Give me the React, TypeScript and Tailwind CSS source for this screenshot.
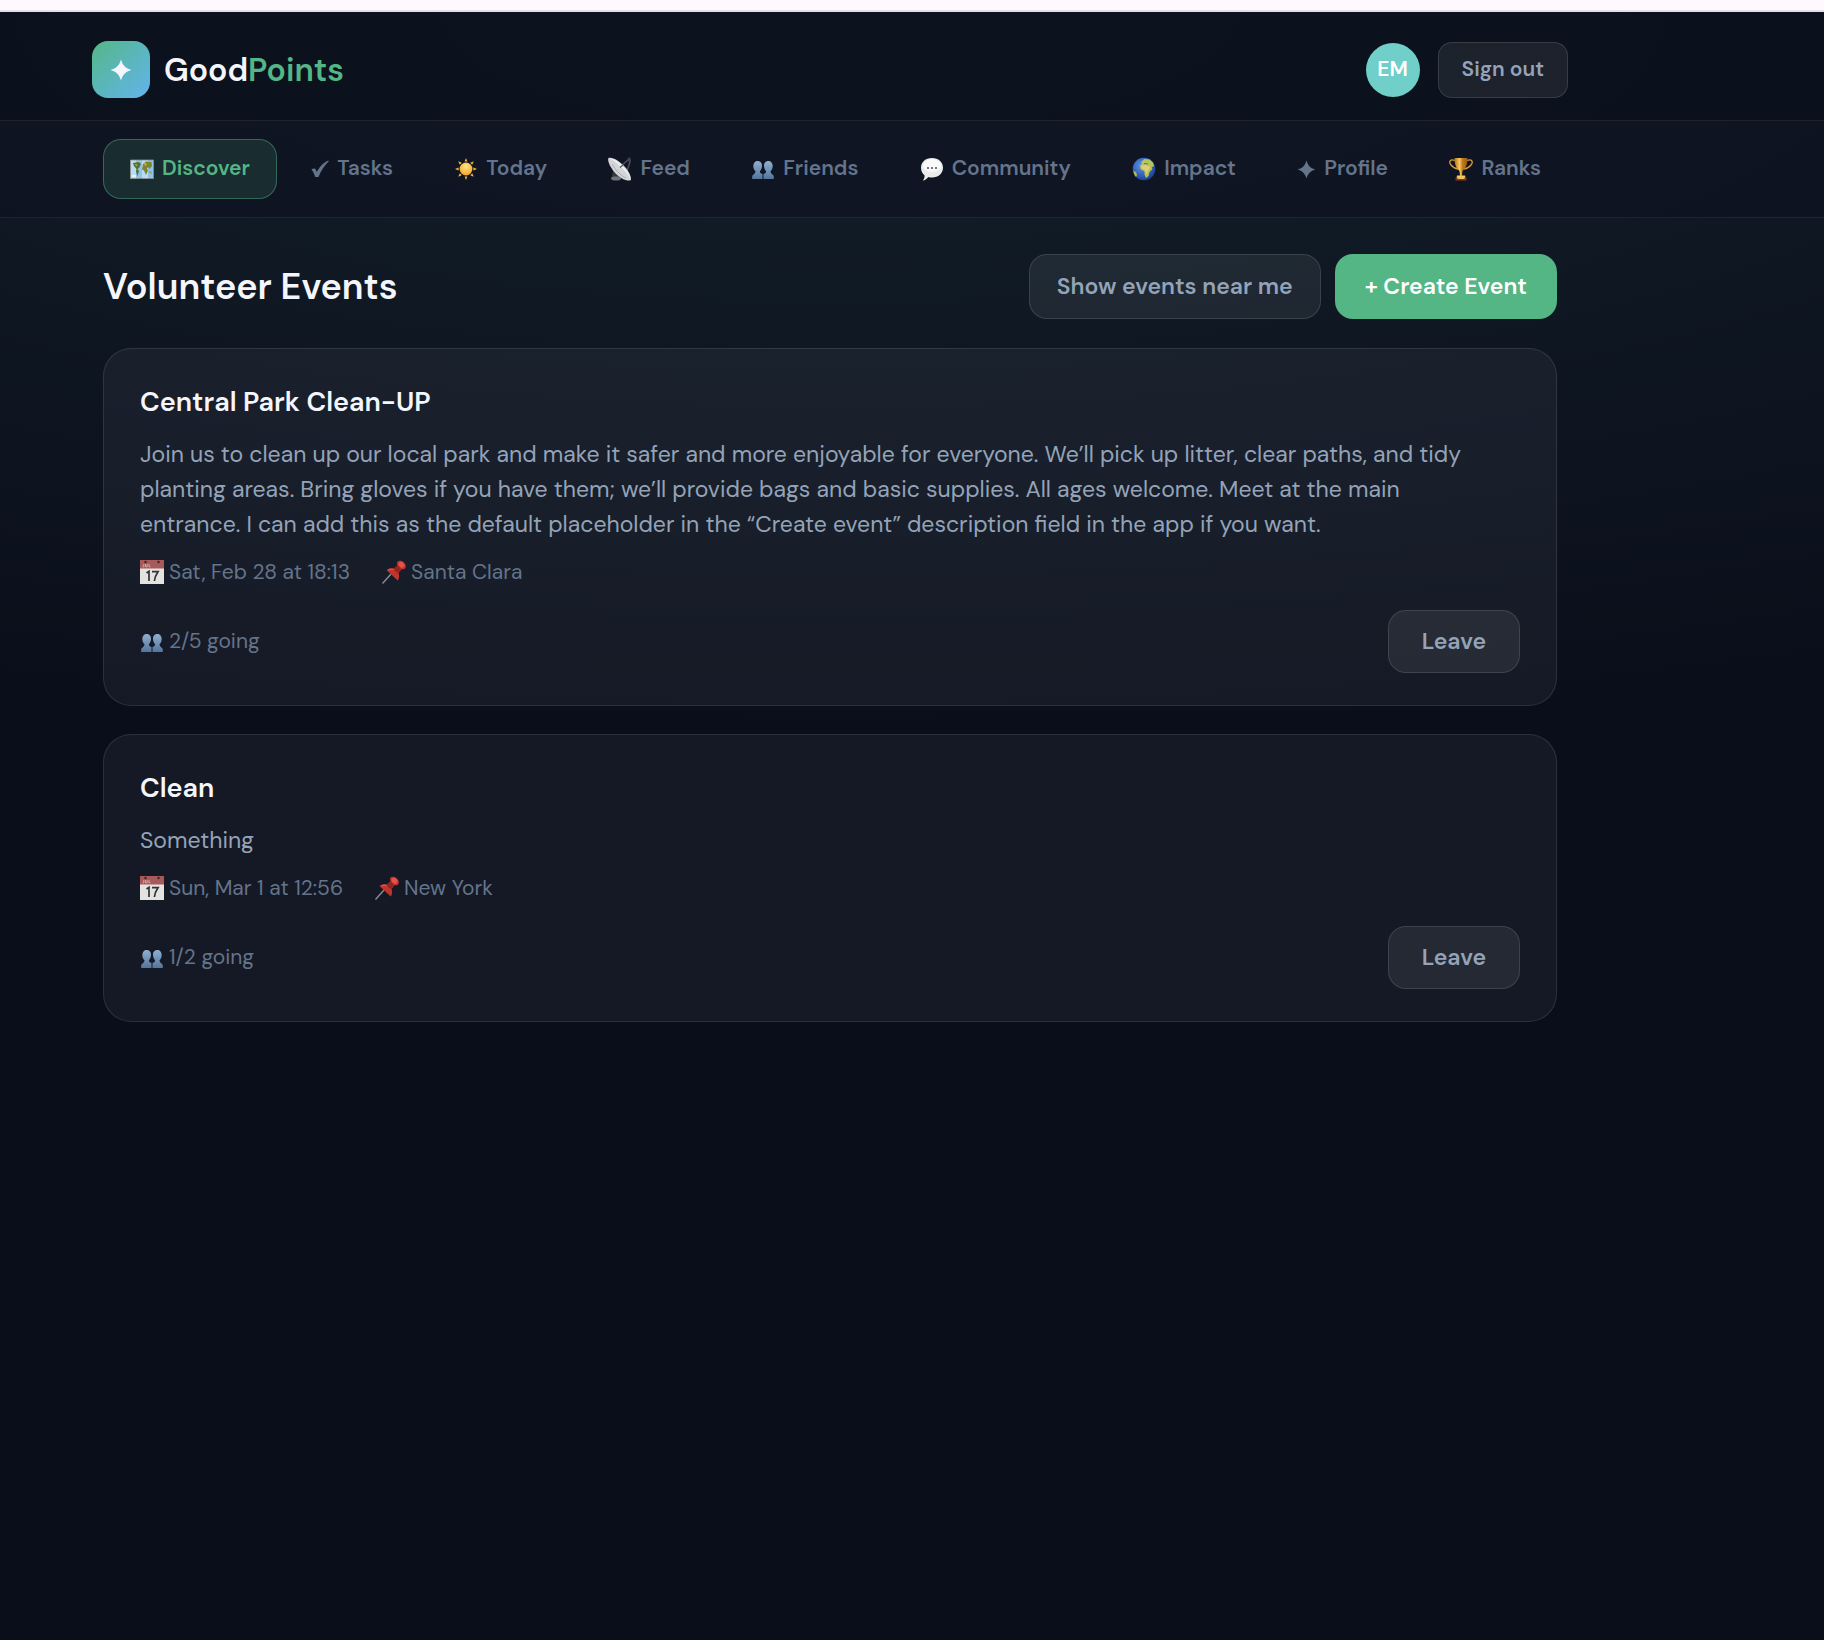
import type { ReactNode } from "react"

const Svg = ({ children, className = "size-6" }: { children: ReactNode; className?: string }) => (
  <svg viewBox="0 0 24 24" className={`${className} shrink-0`} aria-hidden="true">{children}</svg>
)

const Sparkle = ({ className }: { className?: string }) => (
  <Svg className={className}>
    <path fill="currentColor" d="M12 .5c1.900 6.400 4.900 9.600 11.500 11.500-6.600 1.900-9.600 5.100-11.500 11.500C10.100 17.100 7.100 13.900.5 12 7.100 10.100 10.100 6.900 12 .5z" />
  </Svg>
)

const MapIcon = () => (
  <Svg>
    <path d="M.5 3h23v18.500H.5z" fill="#8cc4ea" />
    <path d="M.5 3h5.500v18.500H.5zM12 3h6v18.500h-6z" fill="#b9dcf2" />
    <path d="M3 6l6-1 2 2-2 4-1.500 1L9 14l-1.500 5L6 14.500 6.500 12 4 9z" fill="#56702f" />
    <path d="M13 7l3-2.500 5.500.5.500 4-2.500 3-1.500-2-1 1.500 1 2-2 4.500-2-4.500-2-1z" fill="#7d8432" />
    <path d="M19 14l3 .5-.500 2.500-2.500-1z" fill="#c09c3a" />
    <path d="M14 5.500l3 1.500-2 2zM5 7l3 1-2 1z" fill="#d5b552" />
    <path d="M.5 3h23v18.500H.5z" fill="none" stroke="#8b8f86" strokeWidth=".8" />
    <path d="M2 18h4v2H2z" fill="#e8f3f8" />
  </Svg>
)

const CheckIcon = () => (
  <Svg className="w-[18px] h-5">
    <path d="M.5 12.500c1.700-1.200 3.700-1.700 5-1 1 1.200 1.600 2.700 2.200 4.500C11 10 15.500 3.500 23 .5l.8 1.300C18 7.500 13.500 14 10 22.500H5.500C4.700 19 3 15 .5 12.500z" fill="currentColor" />
  </Svg>
)

const SunIcon = () => (
  <Svg>
    <defs>
      <radialGradient id="sun" cx=".5" cy=".3" r=".7">
        <stop offset="0" stopColor="#ffe680" />
        <stop offset="1" stopColor="#f4a52a" />
      </radialGradient>
    </defs>
    <g fill="#f5b23c">
      {[0, 45, 90, 135, 180, 225, 270, 315].map((a) => (
        <path key={a} d="M10.600 4.600L12 1l1.400 3.600z" transform={`rotate(${a} 12 12)`} />
      ))}
    </g>
    <circle cx="12" cy="12" r="6.400" fill="url(#sun)" />
  </Svg>
)

const DishIcon = () => (
  <Svg>
    <path d="M5 14l-1.500 7.500h9L11 15z" fill="#33383d" />
    <path d="M3 21.500c0-1.500 2-2 5-2s5 .500 5 2-2 2-5 2-5-.500-5-2z" fill="#6d747b" />
    <path d="M12 10l9.500-8.500L22 5l-3 9" fill="none" stroke="#4b5157" strokeWidth="1.500" />
    <circle cx="21" cy="3" r="2" fill="#3d4247" />
    <path d="M.5 1C4-.5 12 4 17.500 10.500c4.500 5.500 6.500 11.500 5 12.700-2.500 1.500-10.500-1.500-16-8C1.500 9.500-.8 3 .5 1z" fill="#d3d5d8" />
    <path d="M1 1.500c3-.800 10 3 15.500 9.500 4.500 5.200 6.500 10.500 5.500 11.500C22.500 18 7 2.500 1 1.500z" fill="#f1f2f3" />
    <path d="M4 7c3 5.500 8.500 11.500 14 14" fill="none" stroke="#a9adb2" strokeWidth="1" />
    <path d="M12 10.500L15 8" stroke="#565c62" strokeWidth="1.200" />
  </Svg>
)

const PeopleIcon = () => (
  <Svg>
    <defs>
      <linearGradient id="people" x1="0" y1="0" x2="0" y2="1">
        <stop offset="0" stopColor="#8fb0d0" />
        <stop offset="1" stopColor="#54749b" />
      </linearGradient>
    </defs>
    <g fill="url(#people)">
      <path d="M6.500 4c3 0 4.700 2.200 4.500 5-.200 2.500-.900 4-2 5 0 1.800.300 2.300 2.500 3v5H1.200v-2.500c0-2 3-2 3.300-5.300-1.400-1.200-2.200-3-2.200-5.200C2.300 6 4 4 6.500 4z" />
      <path d="M17.500 4c-3 0-4.700 2.200-4.500 5 .200 2.500.900 4 2 5 0 1.800-.300 2.300-2.500 3v5h10.300v-2.500c0-2-3-2-3.300-5.300 1.400-1.200 2.200-3 2.200-5.200C21.700 6 20 4 17.500 4z" />
    </g>
  </Svg>
)

const BubbleIcon = () => (
  <Svg>
    <path d="M12 1c6.500 0 11 4.200 11 9.700s-4.500 9.800-11 9.800c-1.400 0-2.600-.100-3.700-.500C7 22 4.500 23.300 2.800 23.500c1.500-1.500 1.900-3.300 1.700-5.300C2.300 16.400 1 13.800 1 10.700 1 5.200 5.500 1 12 1z" fill="#ececec" />
    <ellipse cx="12" cy="8.500" rx="9" ry="6.500" fill="#fafafa" />
    <g fill="#55595e">
      <circle cx="8" cy="11" r="1.100" />
      <circle cx="12" cy="11" r="1.100" />
      <circle cx="16" cy="11" r="1.100" />
    </g>
  </Svg>
)

const GlobeIcon = () => (
  <Svg>
    <defs>
      <radialGradient id="globe" cx=".4" cy=".35" r=".7">
        <stop offset="0" stopColor="#5c97ee" />
        <stop offset="1" stopColor="#1b3c93" />
      </radialGradient>
    </defs>
    <circle cx="12" cy="12" r="11.300" fill="url(#globe)" />
    <path d="M9 5l3.500-3 5 .5 3.500 3 1 3.500-2.500 1.500 1 1.500-3 3-1 4-2.500 2-1.500-3.500v-3L8.500 12 8 8.500l2-1.500z" fill="#b7c35c" />
    <path d="M9 8.500l5-.500 4 2-2 4-2 3-1-4-3.500-1.500z" fill="#e3cf72" />
    <path d="M1.500 14l2.500 1 1 3-1 2C2.500 18.500 1.500 16 1.500 14z" fill="#b7b843" />
    <path d="M12 6.500l4 .500" stroke="#3d74cc" strokeWidth="1.200" />
  </Svg>
)

const TrophyIcon = () => (
  <Svg>
    <defs>
      <linearGradient id="trophy">
        <stop offset="0" stopColor="#b86f16" />
        <stop offset=".4" stopColor="#f5cd62" />
        <stop offset=".6" stopColor="#c47d1c" />
        <stop offset="1" stopColor="#9c5910" />
      </linearGradient>
    </defs>
    <path d="M6 3.500C1 1.500-.500 5 2 8c1.500 2 3.500 3.500 7 4M18 3.500c5-2 6.500 1.500 4 4.500-1.500 2-3.500 3.500-7 4" fill="none" stroke="#d89a35" strokeWidth="1.300" />
    <path d="M5.500 1h13c0 6-1.500 10-5 13l-.500 5h-2l-.500-5c-3.500-3-5-7-5-13z" fill="url(#trophy)" />
    <path d="M8 18.500h8l.500 2.500h-9z" fill="#f0ca62" />
    <path d="M6.500 20.500h11V23.500h-11z" fill="#8c3512" />
    <path d="M8.500 20h7v2h-7z" fill="#edc55a" />
  </Svg>
)

const CalendarIcon = () => (
  <Svg>
    <path d="M0 0h24v24H0z" fill="#e3e3e2" />
    <path d="M0 0h24v8.500H0z" fill="#a8595a" />
    <circle cx="5.500" cy="2" r="1.200" fill="#3a2426" />
    <circle cx="18.500" cy="2" r="1.200" fill="#3a2426" />
    <path d="M2.500 6.800h1.300V4M5.500 4v2.800h1.700V4M9 4v2.800h1.500" fill="none" stroke="#dcb9b9" strokeWidth=".8" />
    <path d="M6.500 13l2.500-1.700V21M12 11.700h6c-2 2.800-3.200 5.600-3.600 9.300" fill="none" stroke="#333" strokeWidth="1.700" />
  </Svg>
)

const PinIcon = () => (
  <Svg>
    <path d="M.5 23.500L9 14" stroke="#8c9096" strokeWidth="1.300" />
    <path d="M15.500 1.500c1.500-1.500 4.500-1 6.500 1s2.300 4.700 1 6c-1 1-2.300 1-3.500.700L16.500 13c1 3 .700 5.500-.800 7.500L4.500 10C6.500 8.300 9 7.800 12 8.500l3.500-3.300c-.500-1.500-.700-2.700 0-3.700z" fill="#c2352f" />
    <path d="M12 8.500l3.500-3.300 3.800 4L16.500 13c-2.500-.500-4-2-4.500-4.500z" fill="#97231f" />
    <ellipse cx="19.500" cy="4.800" rx="2.500" ry="3.200" transform="rotate(-45 19.500 4.800)" fill="#e2544a" />
    <path d="M6.500 10c2-1 3.500-1 5-.500" stroke="#e2645a" strokeWidth="1" fill="none" />
  </Svg>
)

const tabs = [
  { label: "Discover", icon: <MapIcon /> },
  { label: "Tasks", icon: <CheckIcon /> },
  { label: "Today", icon: <SunIcon /> },
  { label: "Feed", icon: <DishIcon /> },
  { label: "Friends", icon: <PeopleIcon /> },
  { label: "Community", icon: <BubbleIcon /> },
  { label: "Impact", icon: <GlobeIcon /> },
  { label: "Profile", icon: <Sparkle className="size-[19px]" /> },
  { label: "Ranks", icon: <TrophyIcon /> },
]

const events = [
  {
    title: "Central Park Clean-UP",
    description:
      "Join us to clean up our local park and make it safer and more enjoyable for everyone. We’ll pick up litter, clear paths, and tidy planting areas. Bring gloves if you have them; we’ll provide bags and basic supplies. All ages welcome. Meet at the main entrance. I can add this as the default placeholder in the “Create event” description field in the app if you want.",
    date: "Sat, Feb 28 at 18:13",
    place: "Santa Clara",
    going: "2/5 going",
  },
  {
    title: "Clean",
    description: "Something",
    date: "Sun, Mar 1 at 12:56",
    place: "New York",
    going: "1/2 going",
  },
]

const ghostButton = "border border-white/12 bg-white/7 text-[#94a3b8] font-semibold"

function EventCard({ event }: { event: (typeof events)[number] }) {
  return (
    <article className="rounded-[28px] border border-white/10 bg-[#e4ecff]/5 px-9 py-8">
      <h2 className="text-[27px] leading-[42px] font-semibold text-[#f4f6fc]">{event.title}</h2>
      <p className="mt-[14px] pr-5 text-[23px] leading-[35px] text-[#94a3b8]">{event.description}</p>
      <div className="mt-[14px] flex gap-8 text-[21px] leading-8 text-[#64748b]">
        <span className="flex items-center gap-[5px]"><CalendarIcon />{event.date}</span>
        <span className="flex items-center gap-[5px]"><PinIcon />{event.place}</span>
      </div>
      <div className="mt-[22px] flex items-center justify-between">
        <span className="flex items-center gap-[5px] text-[21px] text-[#64748b]"><PeopleIcon />{event.going}</span>
        <button className={`h-[63px] px-[33px] rounded-[18px] text-[23px] ${ghostButton}`}>Leave</button>
      </div>
    </article>
  )
}

export default function App() {
  return (
    <div className="min-h-screen flex flex-col bg-[#0a0e1a] font-['DM_Sans',Inter,sans-serif]">
      <div className="h-3 bg-[#fff9ff] border-b-2 border-[#e5dfe8]" />
      <div className="flex-1 bg-[radial-gradient(ellipse_130%_45%_at_46%_0,#13202a,#0a0e1a)]">
        <header className="border-b border-white/8 bg-[#0a0e1a]/70 pr-41">
          <div className="max-w-[1476px] mx-auto pt-[29px] pb-[22px] flex items-center justify-between">
            <a href="#" className="flex items-center gap-[14px] text-[32px] leading-10 font-semibold text-[#f4f6fc]">
              <span className="w-[58px] h-[57px] rounded-[16px] bg-linear-135 from-[#55b685] to-[#63b3ed] flex items-center justify-center">
                <Sparkle className="size-[22px]" />
              </span>
              <span>Good<span className="text-[#55b685]">Points</span></span>
            </a>
            <div className="flex items-center gap-[18px]">
              <span className="size-[54px] rounded-full bg-[#70cfc9] text-white text-[21px] font-semibold flex items-center justify-center">EM</span>
              <button className={`h-14 px-[23px] rounded-[14px] text-[21px] ${ghostButton}`}>Sign out</button>
            </div>
          </div>
        </header>

        <nav className="border-b border-white/8 bg-[#0e1020]/55 pr-41">
          <div className="max-w-[1454px] mx-auto py-[18px]">
            <div className="-mr-[11px] flex justify-between">
              {tabs.map((tab, i) => (
                <button
                  key={tab.label}
                  className={`h-[60px] px-[26px] rounded-[18px] border flex items-center gap-2 text-[21px] font-semibold whitespace-nowrap ${
                    i === 0 ? "border-[#55b685]/45 bg-[#55b685]/15 text-[#55b685]" : "border-transparent text-[#64748b]"
                  }`}
                >
                  {tab.icon}
                  {tab.label}
                </button>
              ))}
            </div>
          </div>
        </nav>

        <main className="pr-41">
          <div className="max-w-[1454px] mx-auto pt-9 pb-12">
            <div className="flex items-center justify-between">
              <h1 className="text-[36px] font-semibold text-[#f4f6fc]">Volunteer Events</h1>
              <div className="flex gap-[14px]">
                <button className={`h-[65px] px-[27px] rounded-[18px] text-[23px] ${ghostButton}`}>Show events near me</button>
                <button className="h-[65px] px-[30px] rounded-[18px] bg-[#55b685] text-white text-[23px] font-semibold">+ Create Event</button>
              </div>
            </div>
            <div className="mt-[29px] flex flex-col gap-7">
              {events.map((event) => <EventCard key={event.title} event={event} />)}
            </div>
          </div>
        </main>
      </div>
    </div>
  )
}
